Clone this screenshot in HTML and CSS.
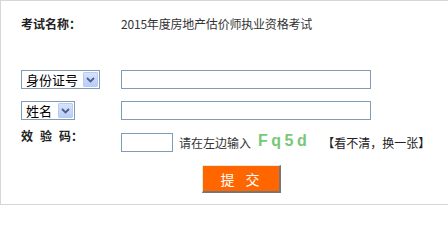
FILE: index.html
```html
<!DOCTYPE html>
<html lang="zh-CN">
<head>
<meta charset="utf-8">
<title>考试查询</title>
<link rel="stylesheet" href="styles.css">
</head>
<body>
<div class="panel">
  <div class="row row-title">
    <div class="label">考试名称：</div>
    <div class="value">2015年度房地产估价师执业资格考试</div>
  </div>
  <div class="row row-field first">
    <div class="label">
      <div class="select sel-id"><span class="sel-text">身份证号</span><span class="arrow"><svg width="9" height="6" viewBox="0 0 9 6"><path d="M1 1 L4.5 4.5 L8 1" fill="none" stroke="#4d6185" stroke-width="1.8"/></svg></span></div>
    </div>
    <input class="text-input" type="text">
  </div>
  <div class="row row-field">
    <div class="label">
      <div class="select sel-name"><span class="sel-text">姓名</span><span class="arrow"><svg width="9" height="6" viewBox="0 0 9 6"><path d="M1 1 L4.5 4.5 L8 1" fill="none" stroke="#4d6185" stroke-width="1.8"/></svg></span></div>
    </div>
    <input class="text-input" type="text">
  </div>
  <div class="row row-code">
    <div class="label code-label"><span class="sp">效</span><span class="sp">验</span><span>码：</span></div>
    <input class="code-input" type="text">
    <span class="hint">请在左边输入</span>
    <span class="captcha">Fq5d</span>
    <span class="refresh">【看不清，换一张】</span>
  </div>
  <div class="row row-btn">
    <button class="submit" type="button">提&nbsp;交</button>
  </div>
</div>
</body>
</html>
```
FILE: styles.css
```css
html, body {
  margin: 0;
  padding: 0;
  background: #ffffff;
}
body {
  font-family: "Noto Sans CJK SC", "Liberation Sans", sans-serif;
  font-size: 12px;
  color: #333333;
}
.panel {
  box-sizing: border-box;
  width: 470px;
  height: 205px;
  border: 1px solid #d6d6d6;
  padding-left: 20px;
  display: flex;
  flex-direction: column;
}
.row {
  display: flex;
  align-items: center;
}
.label {
  width: 100px;
  flex: none;
  font-weight: bold;
  color: #222;
}
.row-title {
  margin-top: 12px;
  height: 22px;
  line-height: 22px;
}
.row-title .value {
  color: #333;
  letter-spacing: -0.2px;
}
.row-field {
  height: 19px;
  margin-top: 12px;
}
.row-field.first {
  margin-top: 35px;
}
.select {
  box-sizing: border-box;
  height: 19px;
  border: 1px solid #7f9db9;
  display: flex;
  align-items: center;
  justify-content: space-between;
  padding-left: 4px;
  padding-right: 1px;
  font-weight: normal;
  font-size: 13px;
  color: #000;
  background: #fff;
}
.sel-id { width: 79px; }
.sel-name { width: 54px; }
.sel-text {
  line-height: 17px;
}
.arrow {
  box-sizing: border-box;
  width: 15px;
  height: 15px;
  border: 1px solid #bacbf2;
  border-radius: 1px;
  background: linear-gradient(#d6e2fd, #b9cdf9);
  display: flex;
  align-items: center;
  justify-content: center;
}
.text-input {
  box-sizing: border-box;
  width: 250px;
  height: 19px;
  margin: 0;
  border: 1px solid #7f9db9;
  padding: 0;
  background: #fff;
}
.row-code {
  margin-top: 9px;
  align-items: flex-start;
  height: 23px;
}
.code-label {
  line-height: 14px;
}
.sp {
  margin-right: 7px;
}
.code-input {
  box-sizing: border-box;
  width: 52px;
  height: 19px;
  margin: 4px 0 0 0;
  border: 1px solid #7f9db9;
  padding: 0;
  background: #fff;
}
.hint {
  margin-left: 6px;
  margin-top: 6px;
  line-height: 16px;
  color: #333;
}
.captcha {
  margin-left: 7px;
  margin-top: 2px;
  font-family: "Liberation Sans", sans-serif;
  font-weight: bold;
  font-size: 16px;
  line-height: 20px;
  letter-spacing: 3.5px;
  color: #79c779;
}
.refresh {
  margin-left: 12px;
  margin-top: 6px;
  line-height: 16px;
  color: #222;
}
.row-btn {
  margin-top: 13px;
  padding-left: 181px;
}
.submit {
  box-sizing: border-box;
  width: 79px;
  height: 28px;
  margin: 0;
  padding: 0;
  background: #ff6600;
  color: #ffffff;
  font-family: "Noto Sans CJK SC", sans-serif;
  font-size: 14px;
  letter-spacing: 2px;
  word-spacing: 4px;
  border-top: 1px solid #ece9d8;
  border-left: 1px solid #ece9d8;
  border-right: 2px solid #767676;
  border-bottom: 2px solid #767676;
}
```
